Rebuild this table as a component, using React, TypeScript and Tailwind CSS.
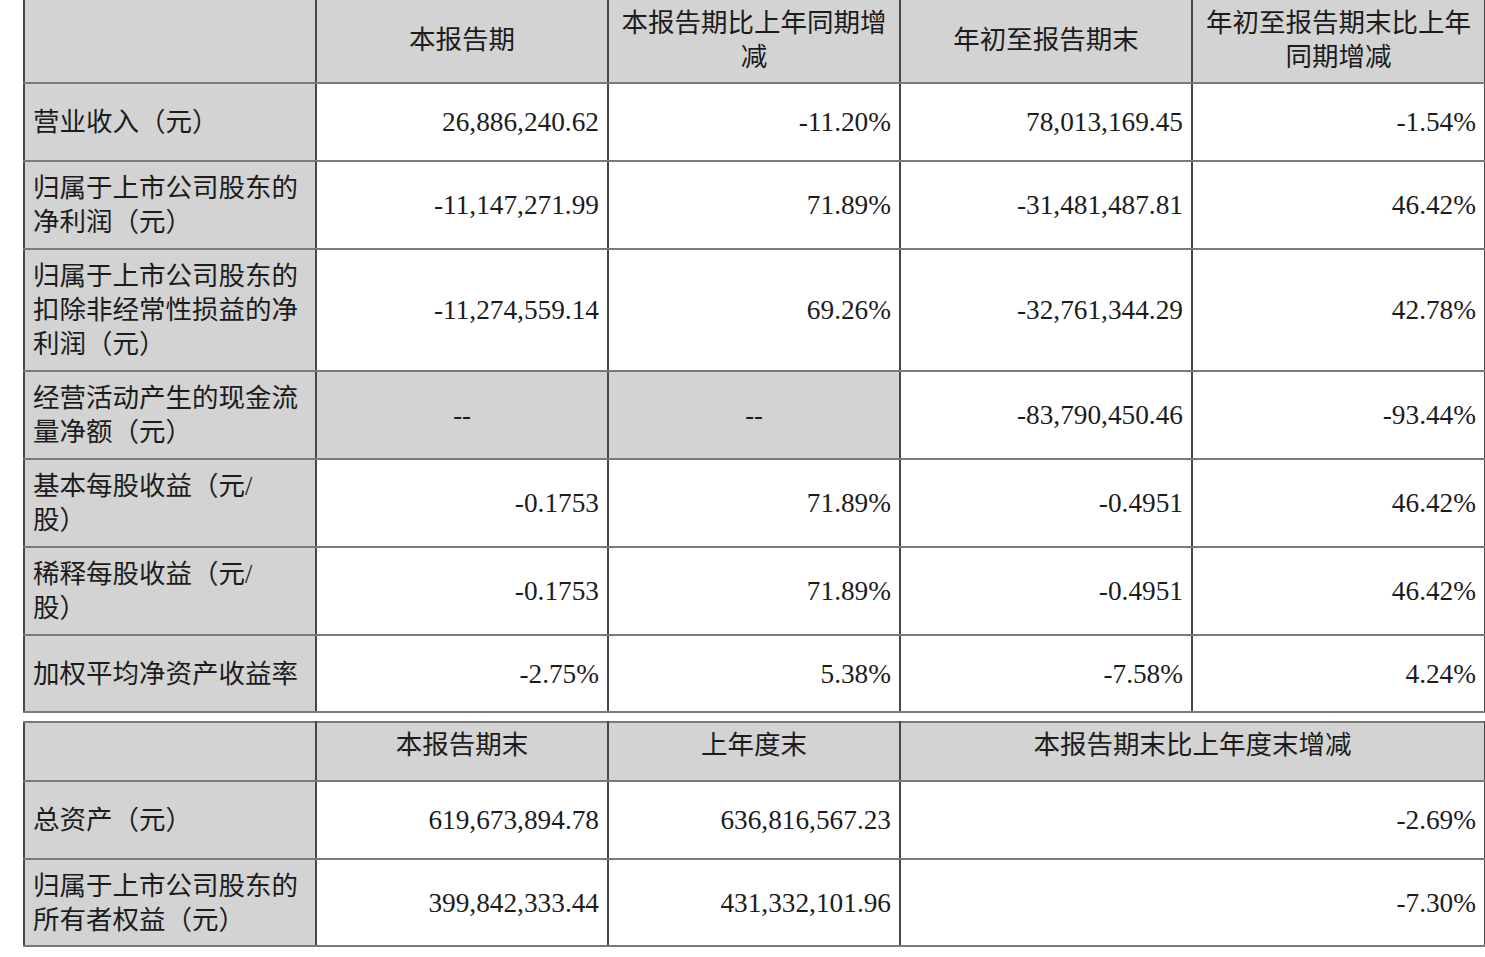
import React from "react";

const font = { fontFamily: '"Liberation Serif", "Noto Sans CJK SC", serif' };

type Row = {
  label: React.ReactNode;
  vals: string[];
  h: string;
  gray?: boolean[];
};

const rows: Row[] = [
  { label: "营业收入（元）", vals: ["26,886,240.62", "-11.20%", "78,013,169.45", "-1.54%"], h: "h-[78px]" },
  {
    label: (
      <>
        归属于上市公司股东的
        <br />
        净利润（元）
      </>
    ),
    vals: ["-11,147,271.99", "71.89%", "-31,481,487.81", "46.42%"],
    h: "h-[88px]",
  },
  {
    label: (
      <>
        归属于上市公司股东的
        <br />
        扣除非经常性损益的净
        <br />
        利润（元）
      </>
    ),
    vals: ["-11,274,559.14", "69.26%", "-32,761,344.29", "42.78%"],
    h: "h-[122px]",
  },
  {
    label: (
      <>
        经营活动产生的现金流
        <br />
        量净额（元）
      </>
    ),
    vals: ["--", "--", "-83,790,450.46", "-93.44%"],
    h: "h-[88px]",
    gray: [true, true, false, false],
  },
  {
    label: (
      <>
        基本每股收益（元/
        <br />
        股）
      </>
    ),
    vals: ["-0.1753", "71.89%", "-0.4951", "46.42%"],
    h: "h-[88px]",
  },
  {
    label: (
      <>
        稀释每股收益（元/
        <br />
        股）
      </>
    ),
    vals: ["-0.1753", "71.89%", "-0.4951", "46.42%"],
    h: "h-[88px]",
  },
  { label: "加权平均净资产收益率", vals: ["-2.75%", "5.38%", "-7.58%", "4.24%"], h: "h-[77px]" },
];

const cellBase =
  "border-x-2 border-x-[#474747] border-y-2 border-y-[#7a7a7a] p-0 text-[26.5px] leading-[34px] text-[#1c1c1c] font-normal";
const num = "bg-white text-right pr-[8px] align-middle text-[27.3px]";

export default function App() {
  return (
    <div className="w-[1485px] h-[957px] overflow-hidden bg-white" style={font}>
      <div className="pl-[23px] mt-[-5px]">
        <table className="border-collapse table-fixed w-[1461px]">
          <colgroup>
            <col className="w-[292px]" />
            <col className="w-[292px]" />
            <col className="w-[292px]" />
            <col className="w-[292px]" />
            <col className="w-[293px]" />
          </colgroup>
          <tbody>
            <tr className="h-[87px]">
              <td className={`${cellBase} bg-[#d3d3d3]`}></td>
              <td className={`${cellBase} bg-[#d3d3d3] text-center align-middle`}>本报告期</td>
              <td className={`${cellBase} bg-[#d3d3d3] text-center align-middle`}>
                本报告期比上年同期增
                <br />减
              </td>
              <td className={`${cellBase} bg-[#d3d3d3] text-center align-middle`}>年初至报告期末</td>
              <td className={`${cellBase} bg-[#d3d3d3] text-center align-middle`}>
                年初至报告期末比上年
                <br />
                同期增减
              </td>
            </tr>
            {rows.map((r, i) => (
              <tr key={i} className={r.h}>
                <td className={`${cellBase} bg-[#d3d3d3] pl-[8px] text-left align-middle whitespace-nowrap`}>
                  {r.label}
                </td>
                {r.vals.map((v, j) => (
                  <td
                    key={j}
                    className={`${cellBase} ${
                      r.gray && r.gray[j] ? "bg-[#d3d3d3] text-center align-middle" : num
                    }`}
                  >
                    {v}
                  </td>
                ))}
              </tr>
            ))}
          </tbody>
        </table>

        <table className="border-collapse table-fixed w-[1461px] mt-[8px]">
          <colgroup>
            <col className="w-[292px]" />
            <col className="w-[292px]" />
            <col className="w-[292px]" />
            <col className="w-[585px]" />
          </colgroup>
          <tbody>
            <tr className="h-[59px]">
              <td className={`${cellBase} bg-[#d3d3d3]`}></td>
              <td className={`${cellBase} bg-[#d3d3d3] text-center align-top pt-[5px]`}>本报告期末</td>
              <td className={`${cellBase} bg-[#d3d3d3] text-center align-top pt-[5px]`}>上年度末</td>
              <td className={`${cellBase} bg-[#d3d3d3] text-center align-top pt-[5px]`}>本报告期末比上年度末增减</td>
            </tr>
            <tr className="h-[78px]">
              <td className={`${cellBase} bg-[#d3d3d3] pl-[8px] text-left align-middle`}>总资产（元）</td>
              <td className={`${cellBase} ${num}`}>619,673,894.78</td>
              <td className={`${cellBase} ${num}`}>636,816,567.23</td>
              <td className={`${cellBase} ${num}`}>-2.69%</td>
            </tr>
            <tr className="h-[87px]">
              <td className={`${cellBase} bg-[#d3d3d3] pl-[8px] text-left align-middle whitespace-nowrap`}>
                归属于上市公司股东的
                <br />
                所有者权益（元）
              </td>
              <td className={`${cellBase} ${num}`}>399,842,333.44</td>
              <td className={`${cellBase} ${num}`}>431,332,101.96</td>
              <td className={`${cellBase} ${num}`}>-7.30%</td>
            </tr>
          </tbody>
        </table>
      </div>
    </div>
  );
}
